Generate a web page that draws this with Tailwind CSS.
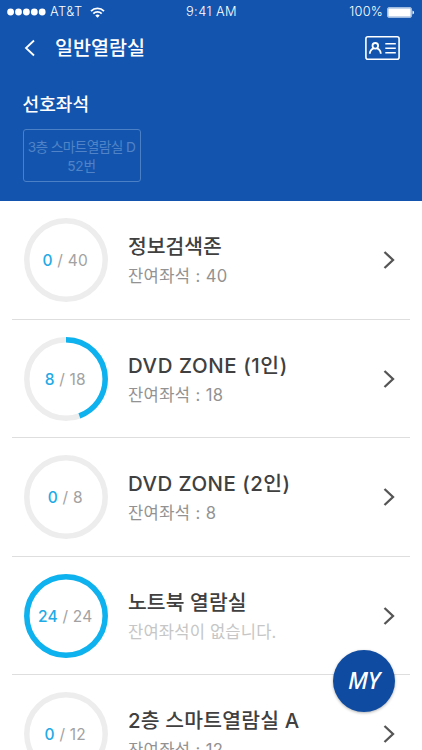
<!DOCTYPE html>
<html lang="ko">
<head>
<meta charset="utf-8">
<meta name="viewport" content="width=device-width, initial-scale=1">
<title>일반열람실</title>
<script src="https://cdn.jsdelivr.net/npm/@tailwindcss/browser@4"></script>
</head>
<body class="relative h-[750px] overflow-hidden bg-white font-['Inter','Noto_Sans_CJK_KR',sans-serif] text-[#404040]">
<header class="h-[201.2px] bg-[#1355ae] text-white">
  <div class="grid h-6 grid-cols-3 items-center pl-[7px] pr-2 text-[13px] leading-6">
    <div class="flex items-center">
      <svg class="h-2 w-[39px]" viewBox="0 0 39 8" fill="currentColor"><circle cx="3.6" cy="4" r="3.4"/><circle cx="11.5" cy="4" r="3.4"/><circle cx="19.4" cy="4" r="3.4"/><circle cx="27.3" cy="4" r="3.4"/><circle cx="35.2" cy="4" r="3.4"/></svg>
      <span class="ml-[4px] text-[12.8px] font-light tracking-[0.5px]">AT&amp;T</span>
      <svg class="ml-[7px] h-[11px] w-[15px]" viewBox="0 0 15 11" fill="none" stroke="currentColor" stroke-width="1.8"><path d="M1 4.1a9.2 9.2 0 0 1 13 0M3.3 6.6a5.9 5.9 0 0 1 8.4 0"/><path d="M7.5 10.8 5.3 8.6a3.1 3.1 0 0 1 4.4 0Z" fill="currentColor" stroke="none"/></svg>
    </div>
    <span class="pl-[2px] text-center text-[12.8px] font-light tracking-[0.45px]">9:41 AM</span>
    <div class="flex items-center justify-end">
      <span class="mr-[4px] text-[12.8px] font-light tracking-[0.2px]">100%</span>
      <svg class="h-[11px] w-[27px]" viewBox="0 0 27 11"><rect x=".5" y=".5" width="24" height="10" rx="1.5" fill="none" stroke="#9fbbe0"/><rect x="1.2" y="1.2" width="22.6" height="8.6" rx=".5" fill="#fff"/><path d="M25.5 3.5q1.5.5 1.5 2t-1.5 2Z" fill="#fff"/></svg>
    </div>
  </div>
  <div class="flex h-[47px] items-center pl-[24px] pr-[22px]">
    <svg class="h-[18px] w-[11px]" viewBox="0 0 11 18" fill="none" stroke="currentColor" stroke-width="1.8"><path d="M10 1.5 2 9l8 7.5"/></svg>
    <h1 class="ml-[20px] pt-px text-[19.6px] font-medium leading-[47px]">일반열람실</h1>
    <svg class="ml-auto h-6 w-[35px]" viewBox="0 0 35 24" fill="none" stroke="currentColor" stroke-width="1.6"><rect x=".9" y=".8" width="33.2" height="22.4" rx="2"/><g stroke-width="1.8"><circle cx="10.3" cy="9.8" r="2.8"/><path d="M4.8 17.8c.1-2.900 1.500-4.600 3.700-5.500M12.100 12.300c2.200.900 3.600 2.600 3.700 5.500"/></g><path d="M20.300 7.800H30.800M20.300 12.300H30.800M20.300 16.800H30.800"/></svg>
  </div>
  <section class="pl-[22.5px] pt-[20px]">
    <h2 class="text-[18.1px] font-medium leading-[27px]">선호좌석</h2>
    <div class="mt-[11px] flex h-[53px] w-[118px] flex-col items-center justify-center rounded-[3px] border-[1.5px] border-[#4b80c7] pt-[3px] text-[14px] leading-[19px] text-[#5083c7]">
      <span class="whitespace-nowrap text-[13.7px] tracking-[-0.6px]">3층 스마트열람실 D</span><span class="text-[13.7px] tracking-[-0.2px]">52번</span>
    </div>
  </section>
</header>
<main id="rooms" class="px-3"></main>
<button class="absolute left-[333px] top-[650px] flex size-[62px] items-center justify-center rounded-full bg-[#0e4ba1] font-['Noto_Sans',sans-serif] text-[23.5px] font-medium italic tracking-[-0.3px] text-white shadow-[0_1px_3px_rgba(0,0,0,0.3)]">MY</button>
<script>
const rooms = [
  ['정보검색존', 0, 40, '잔여좌석 : 40', ''],
  ['DVD ZONE (1인)', 8, 18, '잔여좌석 : 18', 'tracking-[0.6px]'],
  ['DVD ZONE (2인)', 0, 8, '잔여좌석 : 8', 'tracking-[0.5px]'],
  ['노트북 열람실', 24, 24, '잔여좌석이 없습니다.', 'tracking-[0.1px]'],
  ['2층 스마트열람실 A', 0, 12, '잔여좌석 : 12', 'tracking-[0.2px]'],
];
document.getElementById('rooms').innerHTML = rooms.map(([name, used, total, status, tracking]) => `
  <article class="flex h-[118.5px] items-center border-b-[1.5px] border-[#dedede] pl-[12px] pr-[15px] pt-px">
    <div class="grid size-[84px] shrink-0 place-items-center">
      <svg class="col-start-1 row-start-1 size-[84px] -rotate-90" viewBox="0 0 84 84" fill="none" stroke-width="5.5">
        <circle cx="42" cy="42" r="39.2" stroke="#ededed"/>
        <circle cx="42" cy="42" r="39.2" stroke="#0db2ef" pathLength="${total}" stroke-dasharray="${used} ${used === total ? 0 : total}" ${used ? '' : 'visibility="hidden"'}/>
      </svg>
      <span class="col-start-1 row-start-1 whitespace-nowrap pr-[1.5px] pt-px text-[15.5px] tracking-[0.2px] text-[#a2a2a2]"><b class="font-medium text-[#22aae6]">${used}</b> / ${total}</span>
    </div>
    <div class="ml-[20px] whitespace-nowrap pt-[2px]">
      <h3 class="text-[20.4px] font-medium leading-[30px] ${tracking}">${name}</h3>
      <p class="text-[16.6px] leading-[28px] ${used === total ? 'tracking-[0.15px] text-[#c6c6c6]' : 'tracking-[0.35px] text-[#929292]'}">${status}</p>
    </div>
    <svg class="ml-auto h-[18px] w-[12px]" viewBox="0 0 12 18" fill="none" stroke="#555" stroke-width="2.3"><path d="m1.5 1 8.5 8-8.5 8"/></svg>
  </article>`).join('');
</script>
</body>
</html>
